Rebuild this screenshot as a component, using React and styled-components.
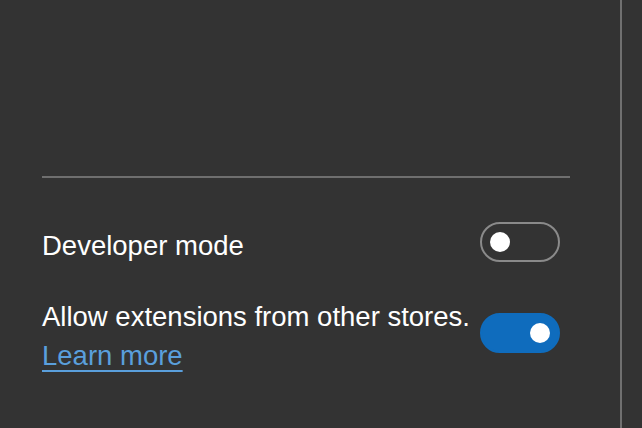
import React, { useState } from 'react';
import styled, { createGlobalStyle } from 'styled-components';

const GlobalStyle = createGlobalStyle`
  html, body {
    margin: 0;
    padding: 0;
    background: #333333;
  }
  body {
    font-family: "Liberation Sans", Arial, sans-serif;
    color: #ffffff;
  }
`;

const Page = styled.div`
  display: flex;
  height: 100vh;
  overflow: hidden;
  background: #333333;
`;

const Panel = styled.div`
  width: 622px;
  box-sizing: border-box;
  padding: 176px 50px 0 42px;
  border-right: 2px solid #707070;
  display: flex;
  flex-direction: column;
`;

const Side = styled.div`
  flex: 1;
`;

const Divider = styled.hr`
  margin: 0 0 44px;
  border: none;
  height: 2px;
  background: #6f6f6f;
`;

const Row = styled.div`
  display: flex;
  align-items: center;
  justify-content: space-between;
  margin-bottom: ${(props) => props.gap || 0}px;
`;

const Label = styled.div`
  font-size: 27.5px;
  line-height: 39px;
  color: #ffffff;
`;

const Link = styled.a`
  display: inline-block;
  color: #5a9fdc;
  text-decoration: underline;
  text-decoration-thickness: 2px;
  text-underline-offset: 5px;
  cursor: pointer;
`;

const Track = styled.button`
  position: relative;
  flex-shrink: 0;
  width: 80px;
  height: 40px;
  margin: 0 10px 6px 0;
  padding: 0;
  box-sizing: border-box;
  border-radius: 20px;
  border: 2px solid ${(props) => (props.on ? '#0f6cbd' : '#8a8a8a')};
  background: ${(props) => (props.on ? '#0f6cbd' : 'transparent')};
  cursor: pointer;
`;

const Knob = styled.span`
  position: absolute;
  top: 8px;
  left: ${(props) => (props.on ? '48px' : '8px')};
  width: 20px;
  height: 20px;
  border-radius: 50%;
  background: #ffffff;
`;

const Toggle = ({ on, onClick }) => (
  <Track on={on ? 1 : 0} onClick={onClick}>
    <Knob on={on ? 1 : 0} />
  </Track>
);

const App = () => {
  const [devMode, setDevMode] = useState(false);
  const [otherStores, setOtherStores] = useState(true);

  return (
    <Page>
      <GlobalStyle />
      <Panel>
        <Divider />
        <Row gap={29}>
          <Label>Developer mode</Label>
          <Toggle on={devMode} onClick={() => setDevMode(!devMode)} />
        </Row>
        <Row>
          <Label>
            Allow extensions from other stores.
            <br />
            <Link>Learn more</Link>
          </Label>
          <Toggle on={otherStores} onClick={() => setOtherStores(!otherStores)} />
        </Row>
      </Panel>
      <Side />
    </Page>
  );
};

export default App;
